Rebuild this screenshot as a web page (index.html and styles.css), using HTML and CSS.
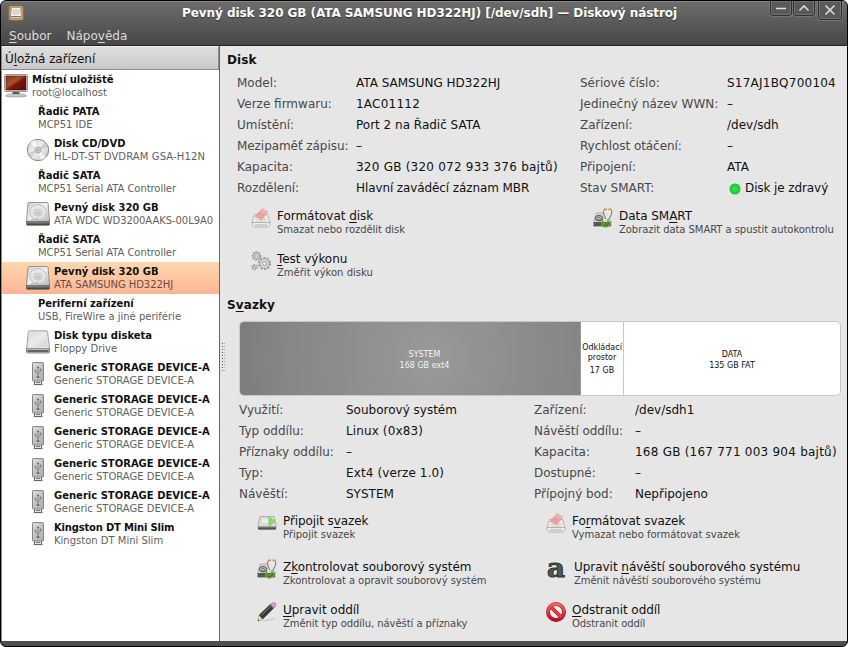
FILE: index.html
```
<!DOCTYPE html>
<html lang="cs">
<head>
<meta charset="utf-8">
<title>Diskový nástroj</title>
<link rel="stylesheet" href="styles.css">
</head>
<body>
<svg class="defs" aria-hidden="true">
  <defs>
    <linearGradient id="metal" x1="0" y1="0" x2="1" y2="1"><stop offset="0" stop-color="#cfcfcf"/><stop offset=".5" stop-color="#f0f0f0"/><stop offset="1" stop-color="#bcbcbc"/></linearGradient>
    <linearGradient id="screen" x1="0" y1="0" x2="1" y2="1"><stop offset="0" stop-color="#8a3018"/><stop offset=".4" stop-color="#a8522e"/><stop offset=".55" stop-color="#7c1608"/><stop offset="1" stop-color="#5a0c04"/></linearGradient>
    <linearGradient id="dark" x1="0" y1="0" x2="0" y2="1"><stop offset="0" stop-color="#999"/><stop offset="1" stop-color="#333"/></linearGradient>
    <linearGradient id="usbg" x1="0" y1="0" x2="1" y2="1"><stop offset="0" stop-color="#dedede"/><stop offset="1" stop-color="#a9a9a9"/></linearGradient>
    <linearGradient id="red" x1="0" y1="0" x2="0" y2="1"><stop offset="0" stop-color="#ef6a5c"/><stop offset="1" stop-color="#b3122c"/></linearGradient>
    <radialGradient id="led"><stop offset="0" stop-color="#42e052"/><stop offset=".7" stop-color="#20d03c"/><stop offset="1" stop-color="#16c030"/></radialGradient>
    <symbol id="computer" viewBox="0 0 24 24">
      <ellipse cx="12" cy="22" rx="11" ry="1.6" fill="#000" opacity=".2"/>
      <rect x=".5" y=".5" width="23" height="17" rx="1" fill="#e4e4e0" stroke="#999"/>
      <rect x="2" y="2" width="20" height="14" fill="url(#screen)" stroke="#5b1208" stroke-width=".6"/>
      <path d="M9 18h6l1 2H8z" fill="#555"/>
      <path d="M4 20.200h16l2 1.800H2z" fill="#eee" stroke="#888" stroke-width=".7"/>
    </symbol>
    <symbol id="disc" viewBox="0 0 24 24">
      <circle cx="12" cy="12" r="10.700" fill="url(#metal)" stroke="#888"/>
      <path d="M12 12 4 5a10 10 0 0 1 5-3zM12 12l8 7a10 10 0 0 1-5 3z" fill="#fff" opacity=".65"/>
      <path d="m12 12 7-8a10 10 0 0 1 3 5zM12 12l-7 8a10 10 0 0 1-3-5z" fill="#aaa" opacity=".45"/>
      <circle cx="12" cy="12" r="3" fill="#ddd" stroke="#999" stroke-width=".8"/>
      <circle cx="12" cy="12" r="1.300" fill="#fff" stroke="#777" stroke-width=".7"/>
    </symbol>
    <symbol id="hdd" viewBox="0 0 24 24">
      <path d="M3 .5h18q1 0 1.100 1L23.500 19.500H.5L1.900 1.500Q2 .5 3 .5z" fill="url(#metal)" stroke="#8c8c8c" stroke-width=".9"/>
      <path d="M.4 19.300h23.200V22q0 1.300-1.300 1.300H1.700Q.4 23.300.4 22z" fill="url(#dark)" stroke="#555" stroke-width=".6"/>
      <ellipse cx="12" cy="10" rx="8.300" ry="7.500" fill="#e6e6e6" stroke="#bdbdbd" stroke-width=".9"/>
      <ellipse cx="12" cy="10.800" rx="4" ry="3.300" fill="#dcdcdc" stroke="#bbb" stroke-width=".8"/>
      <ellipse cx="12" cy="11" rx="1.500" ry="1.200" fill="#f8f8f8" stroke="#999" stroke-width=".7"/>
      <path d="M5 17.500q4 1 7-1" fill="none" stroke="#b0b0b0"/>
    </symbol>
    <symbol id="drive" viewBox="0 0 24 24">
      <path d="M3.500.800h17q1 0 1.100 1L23.500 19H.5L2.400 1.800Q2.500.800 3.500.800z" fill="#e6e6e6" stroke="#999" stroke-width=".9"/>
      <path d="M4 2h16l1.500 15h-19z" fill="url(#metal)" opacity=".5"/>
      <path d="M.5 18.700h23v3.300q0 1-1 1h-21q-1 0-1-1z" fill="#c4c4c4" stroke="#777" stroke-width=".8"/>
      <path d="M1.500 21h21" stroke="#222" stroke-width="1.200"/>
    </symbol>
    <symbol id="usb" viewBox="0 0 12 24">
      <ellipse cx="6" cy="22.500" rx="6" ry="1" fill="#000" opacity=".15"/>
      <rect x="2.500" y="18" width="7" height="4.500" fill="#e5e5e5" stroke="#666"/>
      <path d="M4 20.500h4" stroke="#777"/>
      <rect x=".5" y=".5" width="11" height="18.500" rx=".8" fill="url(#usbg)" stroke="#858585"/>
      <path d="M6 5.500v9M6 12.500 3.500 10.500V8.500M6 11l2.500-1.500V7.500" fill="none" stroke="#808080" stroke-width=".9"/>
      <path d="m6 4-1.500 2h3zM4.800 14h2.400v2H4.800zM2.700 7.700h1.500v1.600H2.700zM7.800 6.700h1.500v1.600H7.800z" fill="#707070"/>
    </symbol>
    <symbol id="eraser" viewBox="0 0 20 20">
      <path d="M3.500 6.500h13l2.500 8q.5 4-1.500 4.500H2.500Q.5 18.500 1 14.500z" fill="#ececea" stroke="#b0b2ac" stroke-width=".9"/>
      <path d="M1 14.500h18M4 17h12" stroke="#b0b2ac" stroke-width="1"/>
      <ellipse cx="10" cy="11.500" rx="5.500" ry="2.600" fill="#d8dad4"/>
      <path d="M4 8.500 11 .8 17 4 10 12z" fill="#e8a0a0" stroke="#dc9494" stroke-width=".7"/>
      <path d="m4 8.500 6 3.500v1.800l-6-3.500z" fill="#f6dada"/>
      <path d="M11 1 17 4l-2.500 2.500L8.700 3.500z" fill="#efb4b4"/>
    </symbol>
    <symbol id="gears" viewBox="0 0 20 20">
      <g fill="none" stroke="#999">
        <circle cx="5.500" cy="5" r="4" stroke-width="1.600" stroke-dasharray="1.800 1.100"/>
        <circle cx="5.500" cy="5" r="3.300" fill="#d5d5d5" stroke-width=".8"/>
        <circle cx="5.500" cy="5" r="1.300" fill="#eee" stroke-width=".8"/>
        <circle cx="13.500" cy="12.500" r="5.600" stroke-width="1.900" stroke-dasharray="2.100 1.400"/>
        <circle cx="13.500" cy="12.500" r="4.800" fill="#d8d8d8" stroke-width=".8"/>
        <circle cx="13.500" cy="12.500" r="2" fill="#eee" stroke-width=".9"/>
        <circle cx="3.500" cy="16.200" r="2.500" stroke-width="1.600" stroke-dasharray="1.400 1.200"/>
        <circle cx="3.500" cy="16.200" r="1.500" fill="#ccc" stroke-width=".8"/>
      </g>
    </symbol>
    <symbol id="check" viewBox="0 0 20 20">
      <path d="M3.500 5h10l4 9v4.500H.8V13z" fill="#d8d8d6" stroke="#999" stroke-width=".7"/>
      <path d="M.7 14h17.500v4H.7z" fill="#555753"/>
      <ellipse cx="6" cy="10.200" rx="3.700" ry="2.700" fill="#b5b5b5" stroke="#555" stroke-width="1"/>
      <circle cx="6" cy="10.700" r="1.300" fill="#eee" stroke="#444" stroke-width=".7"/>
      <path d="M11 2h7.300l.6 4-3.500 5.500h-2L10.300 6z" fill="#e8e8e8" opacity=".9"/>
      <path d="M11 1.800c-2 3 .6 6 1.800 9.200M18.200 1.800c2 3-.6 6-2 9.200" fill="none" stroke="#8a8a8a" stroke-width="1.200"/>
      <path d="M11 1.300h3m1.500 0h3" stroke="#c99448" stroke-width="1.700"/>
      <path d="M8.300 10.500c.8 3 2 5 4 6 2.200-.8 2.800-3 3-5.500" fill="none" stroke="#5ba22a" stroke-width="1.400"/>
      <path d="M8.700 14.500q.3 4.300 3.700 4.500Q17 18.500 17.700 13" fill="none" stroke="#59b41e" stroke-width="1.700"/>
    </symbol>
    <symbol id="mount" viewBox="0 0 20 20">
      <path d="M3 3.500h14l2 8v3.700q0 .8-.8.8H1.800q-.8 0-.8-.8v-3.700z" fill="#dcdcda" stroke="#999" stroke-width=".7"/>
      <path d="M1 13.200h18v2.400q0 .9-.9.900H1.900q-.9 0-.9-.9z" fill="url(#dark)"/>
      <ellipse cx="9" cy="8" rx="5.500" ry="3" fill="#ececea" stroke="#c5c5c5" stroke-width=".6"/>
      <path d="M12 4v9l6.200-4.500z" fill="#80e83c" stroke="#6cc840" stroke-width=".6"/>
    </symbol>
    <symbol id="pencil" viewBox="0 0 20 20">
      <path d="M4 18.500q9-1 13-2.500l1 .8Q12 19 4 19z" fill="#000" opacity=".18"/>
      <path d="m2 13.500 3.500 3.700L1 18.800z" fill="#f4e3a0" stroke="#a89a60" stroke-width=".5"/>
      <path d="m1.400 17.300 1.200 1L.6 19z" fill="#222"/>
      <path d="M2.300 13 13.500 2.300l3.400 3.400L5.700 17z" fill="#3a3a38" stroke="#222" stroke-width=".6"/>
      <path d="M4.200 13.500 14.300 3.700" stroke="#888" stroke-width=".9"/>
      <path d="m13.300 2.700 1.200-1.200 3.500 3.400-1.300 1.200z" fill="#ccc" stroke="#777" stroke-width=".4"/>
      <circle cx="16.800" cy="2.900" r="2.300" fill="#dc9fd2" stroke="#a7669c" stroke-width=".6"/>
    </symbol>
    <symbol id="forbid" viewBox="0 0 20 20">
      <circle cx="10" cy="10" r="8" fill="#f4f0f0" stroke="#b4202c" stroke-width="4"/>
      <path d="m5 5 10 10" stroke="#b4202c" stroke-width="3.800"/>
      <circle cx="10" cy="10" r="8" fill="none" stroke="url(#red)" stroke-width="2.900"/>
      <path d="m4.600 4.600 10.800 10.800" stroke="#dc4044" stroke-width="2.700"/>
    </symbol>
    <symbol id="app" viewBox="0 0 16 16">
      <path d="M.5.500 2 1.200 3.500.500h9l1.500.7L15.500.500v15l-1.500-.7-1.500.7h-9L2 14.800l-1.500.7.400-4L.5 8l.4-3.500z" fill="#c79b61" stroke="#87602f" stroke-width=".7"/>
      <path d="M3.500 2.500h9l1 8.500v2h-11v-2z" fill="#f1f1ed" stroke="#8c8c88" stroke-width=".7"/>
      <path d="M5 5h6v4H5z" fill="#dcdcd8" stroke="#bbb" stroke-width=".6"/>
      <path d="M3 11.500h10" stroke="#777"/>
    </symbol>
  </defs>
</svg>

<div class="window">
  <header class="chrome">
    <div class="titlebar">
      <svg class="app-icon"><use href="#app"/></svg>
      <h1 class="title">Pevný disk 320 GB (ATA SAMSUNG HD322HJ) [/dev/sdh] — Diskový nástroj</h1>
      <div class="controls">
        <span class="control"><svg viewBox="0 0 12 12"><path d="M1 6.500h10"/></svg></span>
        <span class="control"><svg viewBox="0 0 12 12"><path d="m1.500 8.500 4.500-4.500 4.500 4.500"/></svg></span>
        <span class="control close"><svg viewBox="0 0 12 12"><path d="m1.500 1.500 9 9m0-9-9 9"/></svg></span>
      </div>
    </div>
    <nav class="menu"><span><u>S</u>oubor</span><span>Nápo<u>v</u>ěda</span></nav>
  </header>

  <div class="main">
    <aside class="sidebar">
      <div class="sidebar-head">Ú<u>l</u>ožná zařízení</div>
      <ul class="tree">
        <li class="row root"><svg class="pic"><use href="#computer"/></svg><div><b class="tight">Místní uložiště</b><small>root@localhost</small></div></li>
        <li class="row group"><div><b>Řadič PATA</b><small>MCP51 IDE</small></div></li>
        <li class="row"><svg class="pic"><use href="#disc"/></svg><div><b>Disk CD/DVD</b><small class="loose">HL-DT-ST DVDRAM GSA-H12N</small></div></li>
        <li class="row group"><div><b>Řadič SATA</b><small class="tight">MCP51 Serial ATA Controller</small></div></li>
        <li class="row"><svg class="pic"><use href="#hdd"/></svg><div><b>Pevný disk 320 GB</b><small class="tight">ATA WDC WD3200AAKS-00L9A0</small></div></li>
        <li class="row group"><div><b>Řadič SATA</b><small class="tight">MCP51 Serial ATA Controller</small></div></li>
        <li class="row selected"><svg class="pic"><use href="#hdd"/></svg><div><b>Pevný disk 320 GB</b><small class="tight">ATA SAMSUNG HD322HJ</small></div></li>
        <li class="row group"><div><b class="tight">Periferní zařízení</b><small>USB, FireWire a jiné periférie</small></div></li>
        <li class="row"><svg class="pic"><use href="#drive"/></svg><div><b>Disk typu disketa</b><small>Floppy Drive</small></div></li>
        <li class="row"><svg class="pic stick"><use href="#usb"/></svg><div><b>Generic STORAGE DEVICE-A</b><small>Generic STORAGE DEVICE-A</small></div></li>
        <li class="row"><svg class="pic stick"><use href="#usb"/></svg><div><b>Generic STORAGE DEVICE-A</b><small>Generic STORAGE DEVICE-A</small></div></li>
        <li class="row"><svg class="pic stick"><use href="#usb"/></svg><div><b>Generic STORAGE DEVICE-A</b><small>Generic STORAGE DEVICE-A</small></div></li>
        <li class="row"><svg class="pic stick"><use href="#usb"/></svg><div><b>Generic STORAGE DEVICE-A</b><small>Generic STORAGE DEVICE-A</small></div></li>
        <li class="row"><svg class="pic stick"><use href="#usb"/></svg><div><b>Generic STORAGE DEVICE-A</b><small>Generic STORAGE DEVICE-A</small></div></li>
        <li class="row"><svg class="pic stick"><use href="#usb"/></svg><div><b class="tighter">Kingston DT Mini Slim</b><small>Kingston DT Mini Slim</small></div></li>
      </ul>
    </aside>
    <div class="grip"><i></i></div>

    <main class="detail">
      <h2>Disk</h2>
      <dl class="facts disk">
        <dt>Model:</dt><dd>ATA SAMSUNG HD322HJ</dd><dt>Sériové číslo:</dt><dd class="wide">S17AJ1BQ700104</dd>
        <dt>Verze firmwaru:</dt><dd class="wide">1AC01112</dd><dt>Jedinečný název WWN:</dt><dd>–</dd>
        <dt>Umístění:</dt><dd>Port 2 na Řadič SATA</dd><dt>Zařízení:</dt><dd>/dev/sdh</dd>
        <dt class="tight">Mezipaměť zápisu:</dt><dd>–</dd><dt class="tight">Rychlost otáčení:</dt><dd>–</dd>
        <dt>Kapacita:</dt><dd class="wide">320 GB (320 072 933 376 bajtů)</dd><dt>Připojení:</dt><dd>ATA</dd>
        <dt>Rozdělení:</dt><dd class="snug">Hlavní zaváděcí záznam MBR</dd><dt>Stav SMART:</dt><dd class="status"><svg class="led" viewBox="0 0 12 12"><circle cx="6" cy="6" r="5.500" fill="url(#led)"/></svg>Disk je zdravý</dd>
      </dl>
      <div class="actions disk-actions">
        <div class="action"><svg class="ico"><use href="#eraser"/></svg><div><span>Formátovat <u>d</u>isk</span><small class="tight">Smazat nebo rozdělit disk</small></div></div>
        <div class="action"><svg class="ico"><use href="#check"/></svg><div><span>Data SM<u>A</u>RT</span><small class="tight">Zobrazit data SMART a spustit autokontrolu</small></div></div>
        <div class="action"><svg class="ico"><use href="#gears"/></svg><div><span><u>T</u>est výkonu</span><small>Změřit výkon disku</small></div></div>
      </div>

      <h2>S<u>v</u>azky</h2>
      <div class="volumes">
        <div class="volume system">SYSTEM<br>168 GB ext4</div>
        <div class="volume swap"><span>Odkládací<br>prostor</span><span>17 GB</span></div>
        <div class="volume data">DATA<br>135 GB FAT</div>
      </div>
      <dl class="facts vol">
        <dt>Využití:</dt><dd>Souborový systém</dd><dt>Zařízení:</dt><dd>/dev/sdh1</dd>
        <dt>Typ oddílu:</dt><dd class="loose">Linux (0x83)</dd><dt class="tight">Návěští oddílu:</dt><dd>–</dd>
        <dt>Příznaky oddílu:</dt><dd>–</dd><dt>Kapacita:</dt><dd class="wide">168 GB (167 771 003 904 bajtů)</dd>
        <dt>Typ:</dt><dd class="loose">Ext4 (verze 1.0)</dd><dt>Dostupné:</dt><dd>–</dd>
        <dt>Návěští:</dt><dd>SYSTEM</dd><dt>Přípojný bod:</dt><dd>Nepřipojeno</dd>
      </dl>
      <div class="actions vol-actions">
        <div class="action"><svg class="ico"><use href="#mount"/></svg><div><span class="snug">Připojit s<u>v</u>azek</span><small>Připojit svazek</small></div></div>
        <div class="action"><svg class="ico"><use href="#eraser"/></svg><div><span>Fo<u>r</u>mátovat svazek</span><small>Vymazat nebo formátovat svazek</small></div></div>
        <div class="action"><svg class="ico"><use href="#check"/></svg><div><span>Z<u>k</u>ontrolovat souborový systém</span><small class="tight">Zkontrolovat a opravit souborový systém</small></div></div>
        <div class="action label"><svg class="ico" viewBox="0 0 20 20"><text class="letter" x="1" y="18" textLength="18" lengthAdjust="spacingAndGlyphs">a</text></svg><div><span>Upravit <u>n</u>ávěští souborového systému</span><small class="tight">Změnit návěští souborového systému</small></div></div>
        <div class="action"><svg class="ico"><use href="#pencil"/></svg><div><span><u>U</u>pravit oddíl</span><small class="tight">Změnit typ oddílu, návěští a příznaky</small></div></div>
        <div class="action"><svg class="ico"><use href="#forbid"/></svg><div><span><u>O</u>dstranit oddíl</span><small class="tight">Odstranit oddíl</small></div></div>
      </div>
    </main>
  </div>
</div>
</body>
</html>
```
FILE: styles.css
```
* { box-sizing: border-box; }
body { margin: 0; background: #fff; font: 12px/14px "DejaVu Sans", sans-serif; color: #111; }
h1, h2, dl, dd, ul { margin: 0; padding: 0; }
u { text-decoration: underline; text-decoration-thickness: 1px; text-underline-offset: 1.5px; text-decoration-skip-ink: none; }
small { display: block; font-size: 10px; line-height: 13px; }
.defs { position: absolute; width: 0; height: 0; }

.window { display: flex; flex-direction: column; width: 848px; height: 647px; border: 1px solid #000; border-radius: 6px; background: #4e4e4e; overflow: hidden; }

.chrome { flex: none; height: 45px; background: linear-gradient(#6c6c6c, #474747); border-top: 1px solid #858585; border-bottom: 1px solid #262326; }
.titlebar { display: flex; height: 25px; padding-left: 7px; }
.app-icon { flex: none; width: 16px; height: 16px; margin-top: 3px; }
.title { flex: 1; padding-top: 4px; padding-left: 158px; font-size: 12px; line-height: 14px; letter-spacing: -.065px; color: #fff; text-shadow: 0 1px 1px #333; white-space: nowrap; }
.controls { display: flex; align-items: flex-start; gap: 1px; padding-right: 5px; margin-top: -2px; }
.control { display: flex; align-items: center; justify-content: center; width: 22px; height: 16px; border: 1px solid #303030; border-radius: 0 0 3px 3px; box-shadow: 0 0 0 1px #747474, inset 0 0 0 1px #727272; background: #595959; }
.control.close { width: 24px; height: 20px; margin-left: 2px; }
.control svg { width: 12px; height: 12px; fill: none; stroke: #ddd; stroke-width: 1.6; }
.menu { display: flex; gap: 15px; padding: 2px 0 0 8px; color: #dcdcdc; }

.main { display: flex; height: 595px; background: #e6e6e6; }
.sidebar { flex: none; width: 219px; border-left: 1px solid #8a8a8a; border-right: 1px solid #666; background: #fff; }
.sidebar-head { height: 24px; padding: 5px 0 0 3px; background: linear-gradient(#dedede, #c9c9c9); border: 1px solid #8d8d8d; border-top-color: #f2f2f2; border-left: 0; letter-spacing: -.06px; }
.tree { list-style: none; }
.row { display: flex; height: 32px; padding: 3px 0 0 52px; white-space: nowrap; }
.row b { display: block; font-size: 10px; line-height: 13px; }
.row small { color: #5f5f5f; }
.row.root { padding-left: 2px; }
.row.group { padding-left: 36px; }
.pic { flex: none; width: 24px; height: 24px; margin: 1px 4px 0 -28px; }
.root .pic { margin: 1px 4px 0 0; }
.pic.stick { width: 12px; margin: 1px 10px 0 -22px; }
.row.selected { background: linear-gradient(#fed8ae, #fdb495); }
.row.selected small { color: #6a4d42; }
.tight { letter-spacing: -.06px; }
.tighter { letter-spacing: -.19px; }
.snug { letter-spacing: -.1px; }
.wide { letter-spacing: .23px; }
.loose { letter-spacing: .12px; }

.grip { flex: none; display: flex; align-items: center; width: 7px; padding: 28px 0 0 2px; }
.grip i { width: 3px; height: 30px; background: linear-gradient(90deg, #555 1px, transparent 1px 2px, #aaa 2px), #e6e6e6; mask: repeating-linear-gradient(#000 0 1.500px, transparent 1.500px 3px); }

.detail { flex: 1; padding-top: 7px; }
h2 { font-size: 12px; line-height: 14px; letter-spacing: .1px; }
.facts { display: grid; grid-auto-rows: 21px; line-height: 21px; white-space: nowrap; }
.facts dt { color: #484848; }
.facts.disk { grid-template-columns: 119px 224px 147px auto; padding: 6px 0 0 10px; }
.facts.vol { grid-template-columns: 107px 188px 101px auto; padding: 4px 0 0 12px; }
.status { display: flex; align-items: center; gap: 4px; padding-left: 2px; letter-spacing: -.1px; }
.led { width: 12px; height: 12px; }

.actions { display: grid; white-space: nowrap; }
.action { display: flex; gap: 6px; }
.action span { display: block; letter-spacing: -.04px; }
.action span.snug { letter-spacing: -.1px; }
.action small { color: #484848; }
.ico { flex: none; width: 20px; height: 20px; margin-top: -1px; overflow: visible; }
.disk-actions { grid-template-columns: 342px auto; grid-auto-rows: 43px; padding: 10px 0 3px 24px; }
.vol-actions { grid-template-columns: 289px auto; grid-template-rows: 46px 43px auto; padding: 9px 0 0 30px; }
.action.label { gap: 8px; }
.letter { font: bold 26px "DejaVu Serif", serif; fill: #555753; stroke: #2e3436; stroke-width: 1; }

.volumes { display: flex; width: 602px; height: 75px; margin: 9px 0 0 12px; border: 1px solid #c8c8c8; border-radius: 5px; overflow: hidden; background: #fff; font-size: 8px; line-height: 11px; text-align: center; }
.volume { display: flex; flex-direction: column; align-items: center; justify-content: center; }
.system { display: block; padding: 27px 0 0 29px; width: 342px; margin: -1px 0 -1px -1px; color: #f4f4f4; background: radial-gradient(circle 200px at 56% 50%, #999, #848484 80%, #7a7a7a); border: 1px solid #989898; }
.swap { width: 43px; border-right: 1px solid #c8c8c8; gap: 3px; line-height: 10px; padding-top: 2px; }
.data { flex: 1; display: block; padding-top: 27px; }
```
